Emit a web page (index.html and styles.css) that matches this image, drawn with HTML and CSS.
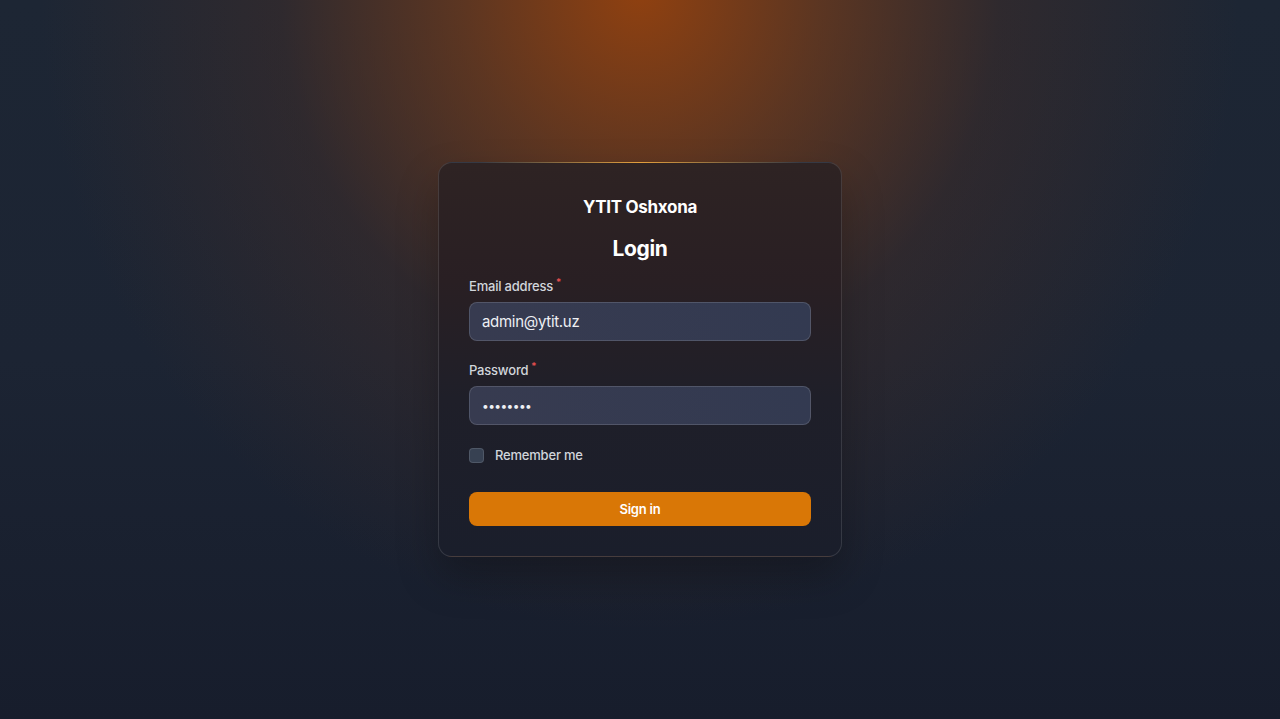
FILE: index.html
```html
<!DOCTYPE html>
<html lang="en">
<head>
<meta charset="utf-8">
<title>Login - YTIT Oshxona</title>
<link rel="stylesheet" href="styles.css">
</head>
<body>
<main class="page">
  <section class="card">
    <div class="brand">YTIT Oshxona</div>
    <h1 class="heading">Login</h1>
    <form class="form">
      <div class="field">
        <label class="label">Email address<sup class="req">*</sup></label>
        <div class="input"><span class="value">admin@ytit.uz</span></div>
      </div>
      <div class="field">
        <label class="label">Password<sup class="req">*</sup></label>
        <div class="input"><span class="value dots">••••••••</span></div>
      </div>
      <label class="remember"><span class="checkbox"></span><span class="remember-text">Remember me</span></label>
      <button type="button" class="button">Sign in</button>
    </form>
  </section>
</main>
</body>
</html>
```
FILE: styles.css
```css
* { box-sizing: border-box; }
html, body { margin: 0; padding: 0; height: 100%; }
body {
  font-family: "Inter", "Liberation Sans", sans-serif;
  background-color: #1a2130;
  background-image:
    radial-gradient(ellipse 600px 640px at 640px -10px, rgba(150, 66, 14, 0.95) 0%, rgba(125, 62, 24, 0.65) 30%, rgba(80, 48, 35, 0.35) 60%, rgba(30, 36, 50, 0) 100%),
    linear-gradient(180deg, #1d2634 0%, #1c2433 50%, #171d2c 100%);
  color: #fff;
}
.page {
  height: 719px;
  display: flex;
  justify-content: center;
  align-items: flex-start;
  padding-top: 162px;
}
.card {
  position: relative;
  width: 404px;
  border: 1px solid rgba(255, 255, 255, 0.12);
  border-radius: 14px;
  padding: 30px 30px 30px;
  background: linear-gradient(180deg, #2e2323 0%, #291f23 30%, #1f1f29 60%, #1a1e2b 100%);
  box-shadow: 0 20px 40px rgba(0, 0, 0, 0.25);
}
.card::before {
  content: "";
  position: absolute;
  top: -1px; left: 40px; right: 40px;
  height: 1px;
  background: linear-gradient(90deg, rgba(245,158,11,0) 0%, rgba(245,170,60,0.9) 50%, rgba(245,158,11,0) 100%);
}
.brand {
  text-align: center;
  font-size: 17px;
  font-weight: 700;
  letter-spacing: -0.3px;
  line-height: 28px;
}
.heading {
  margin: 12px 0 0;
  text-align: center;
  font-size: 21px;
  font-weight: 700;
  letter-spacing: -0.4px;
  line-height: 32px;
}
.form {
  margin-top: 11px;
  display: flex;
  flex-direction: column;
}
.field { display: flex; flex-direction: column; margin-bottom: 19px; }
.label {
  font-size: 13px;
  font-weight: 500;
  color: #d1d5db;
  letter-spacing: -0.2px;
  line-height: 20px;
  margin-bottom: 6px;
}
.req { color: #f05252; font-size: 10px; margin-left: 3px; vertical-align: 5px; line-height: 0; }
.input {
  height: 39px;
  border-radius: 8px;
  border: 1px solid rgba(255, 255, 255, 0.14);
  background: linear-gradient(90deg, #373b50 0%, #333a51 100%);
  display: flex;
  align-items: center;
  padding: 0 12px;
}
.value { font-size: 15px; color: #eef0f4; letter-spacing: -0.3px; }
.dots { font-size: 12px; letter-spacing: -0.6px; }
.remember {
  display: flex;
  align-items: center;
  gap: 11px;
  margin-top: 3px;
}
.checkbox {
  width: 15px; height: 15px;
  border-radius: 4px;
  background: #374152;
  border: 1px solid rgba(255,255,255,0.12);
}
.remember-text { font-size: 13px; font-weight: 500; color: #d1d5db; letter-spacing: -0.2px; }
.button {
  margin-top: 29px;
  height: 34px;
  border: none;
  border-radius: 8px;
  background: #d97706;
  color: #fff;
  font-family: inherit;
  font-size: 13px;
  font-weight: 600;
  letter-spacing: -0.2px;
}
```
